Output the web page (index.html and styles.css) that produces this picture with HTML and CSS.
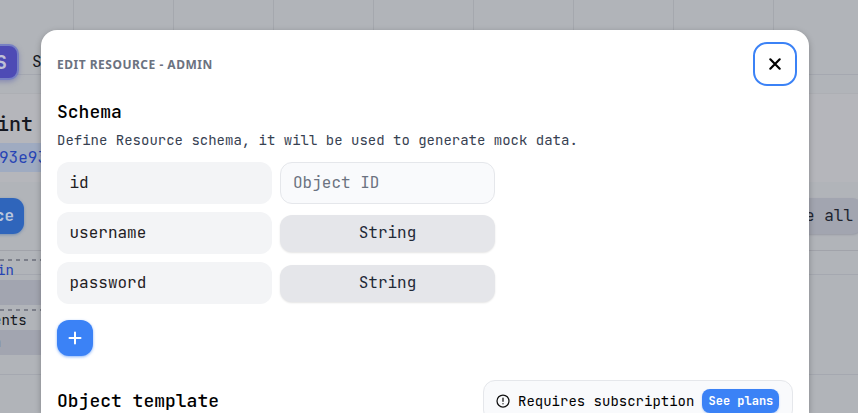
FILE: index.html
```html
<!DOCTYPE html>
<html lang="en">
<head>
<meta charset="utf-8">
<title>Edit resource</title>
<link rel="stylesheet" href="styles.css">
</head>
<body>
<div class="page">
  <header class="top"><div class="logo">S</div><span>S</span></header>
  <section class="endpoint">
    <h1>int</h1>
    <div class="url">93e93</div>
  </section>
  <section class="toolbar">
    <button class="btn create">ce</button>
    <button class="btn generate">e all</button>
  </section>
  <div class="resources">
    <div class="resource"><span class="name active">in</span><div class="bar"></div></div>
    <div class="resource"><span class="name">ents</span><div class="bar"><span>a</span></div></div>
  </div>
</div>
<main class="modal">
  <div class="modal-head">
    <h2>EDIT RESOURCE - ADMIN</h2>
    <button class="close" aria-label="Close">
      <svg width="24" height="24" viewBox="0 0 24 24" fill="none" stroke="#000" stroke-width="2.2" stroke-linecap="round"><path d="M7.3 7.3l9.4 9.4M16.7 7.3l-9.4 9.4"/></svg>
    </button>
  </div>
  <h3>Schema</h3>
  <p>Define Resource schema, it will be used to generate mock data.</p>
  <div class="fields">
    <div class="field">id</div><div class="field object">Object ID</div>
    <div class="field">username</div><button class="type">String</button>
    <div class="field">password</div><button class="type">String</button>
  </div>
  <button class="add" aria-label="Add">
    <svg width="16" height="16" viewBox="0 0 16 16" stroke="#fff" stroke-width="2" stroke-linecap="round"><path d="M8 2.5v11M2.5 8h11"/></svg>
  </button>
  <div class="template">
    <h3>Object template</h3>
    <div class="notice">
      <svg width="14" height="14" viewBox="0 0 14 14" fill="none" stroke="#111" stroke-width="1.25" stroke-linecap="round"><circle cx="7" cy="7" r="6"/><path d="M7 4v3.3M7 9.7v.1"/></svg>
      <span>Requires subscription</span>
      <button class="plans">See plans</button>
    </div>
  </div>
</main>
</body>
</html>
```
FILE: styles.css
```css
* { box-sizing: border-box; margin: 0; }
body {
  height: 413px;
  overflow: hidden;
  position: relative;
  font: 16px/24px "JetBrains Mono", "DejaVu Sans Mono", monospace;
}
button { font: inherit; border: 0; padding: 0; }
svg { display: block; flex: none; }
.page {
  height: 413px;
  overflow: hidden;
  color: #151821;
  background-color: #b1b4b9;
  background-image:
    linear-gradient(#a5a8b0 1px, transparent 1px),
    linear-gradient(90deg, #a5a8ae 1px, transparent 1px);
  background-size: 100px 100px;
  background-position: 73px 74px;
}
.top { height: 93px; padding-top: 44px; display: flex; align-items: flex-start; gap: 13px; line-height: 36px; }
.logo {
  width: 37px; height: 36px; margin-left: -18px;
  border: 2px solid #7780c3; border-radius: 10px;
  background: #4e4bb5; color: #bfc1d6;
  font-weight: bold; font-size: 20px; line-height: 32px;
  text-align: right; padding-right: 10px;
  box-shadow: 0 2px 5px #6268ad88;
}
.endpoint { height: 89px; padding-top: 16px; background: #b5b6bb; border-top: 1px solid #adafb4; }
h1 { font-size: 20px; font-weight: 500; line-height: 28px; margin-left: -3px; }
.url { height: 29px; margin: 5px 70px 0 0; background: #9fabc1; color: #2744b5; line-height: 29px; text-indent: -1px; }
.toolbar {
  height: 69px; padding: 16px 0; display: flex; justify-content: space-between;
  background: #b1b4b9; border-bottom: 1px solid #a1a3aa;
}
.btn { height: 36px; line-height: 36px; border-radius: 11px; }
.create { width: 44px; margin-left: -20px; text-align: right; padding-right: 10px; background: #2f65bb; color: #bbc7dc; font-weight: bold; box-shadow: 0 1px 3px #406ead88; }
.generate { width: 120px; margin-right: -5px; text-align: right; padding-right: 10px; color: #20242f; background: #a2a5b0; box-shadow: 0 1px 2px #989ba5; }
.resources { width: 100px; padding-top: 8px; font-size: 14px; }
.resource { height: 50px; }
.name {
  display: block; height: 21px; line-height: 21px; padding-top: 1px;
  background: repeating-linear-gradient(90deg, #7b7e89 0 4px, transparent 4px 8px) top / 100% 2px no-repeat;
  text-indent: -7px;
}
.active { color: #2744b5; text-indent: -3px; }
.bar { height: 25px; background: #a2a5b0; line-height: 25px; text-indent: -7px; color: #777b84; }
.modal {
  position: absolute; left: 41px; top: 30px; width: 768px; height: 383px; overflow: hidden;
  padding: 12px 16px 0; border-radius: 16px 16px 0 0; background: #fff; color: #000;
  box-shadow: 0 2px 6px #00000045;
}
.modal-head { display: flex; justify-content: space-between; height: 44px; margin-right: -4px; }
h2 { font: bold 12px/45px "Noto Sans", sans-serif; letter-spacing: .5px; color: #6b7280; }
.close {
  width: 44px; height: 44px; border: 2px solid #3b82f6; border-radius: 14px;
  background: #fff; display: grid; place-items: center;
}
h3 { font-size: 18px; line-height: 28px; font-weight: 500; margin-top: 12px; }
p { font-size: 14px; line-height: 20px; margin-top: 4px; color: #374151; }
.fields { display: grid; grid-template-columns: 215px 215px; gap: 8px; margin-top: 12px; align-items: center; }
.field { height: 42px; padding: 0 12.5px; border-radius: 12px; background: #f3f4f6; color: #1f2023; line-height: 41px; }
.object { padding: 0 12px; border: 1px solid #e5e7eb; background: #f9fafc; color: #6b7280; line-height: 39px; }
.type { height: 37px; border-radius: 12px; background: #e5e6ea; color: #1f2937; line-height: 34px; box-shadow: 0 1px 2px #0000001c; }
.add { width: 36px; height: 36px; margin-top: 16px; border-radius: 12px; background: #3b82f6; display: grid; place-items: center; box-shadow: 0 1px 3px #3b82f699; }
.template { display: flex; justify-content: space-between; align-items: flex-start; margin-top: 24px; }
.template h3 { margin-top: 7px; }
.notice {
  width: 310px; height: 42px; display: flex; align-items: center; gap: 8px;
  padding: 0 12px; border: 1px solid #e5e7eb; border-radius: 12px; background: #f9fafc;
  font-size: 14px;
}
.plans { width: 77px; height: 24px; border-radius: 8px; background: #3b82f6; color: #fff; font-size: 12px; font-weight: bold; line-height: 23px; box-shadow: 0 1px 2px #3b82f666; }
```
